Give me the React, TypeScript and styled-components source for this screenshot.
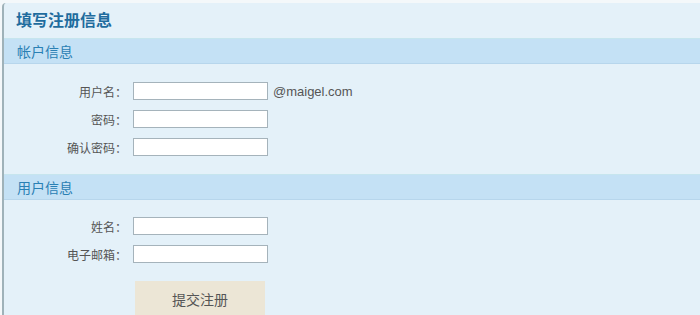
import React from 'react';
import styled, { createGlobalStyle } from 'styled-components';

const GlobalStyle = createGlobalStyle`
  html, body {
    margin: 0;
    padding: 0;
    background: #f4f8fa;
    font-family: "Liberation Sans", "Noto Sans CJK SC", sans-serif;
  }
`;

const Panel = styled.div`
  margin: 3px 0 0 2px;
  height: 312px;
  background: #e4f1f9;
  border-left: 2px solid #9fb2b9;
  border-top-left-radius: 4px;
  overflow: hidden;
`;

const Title = styled.h1`
  margin: 0;
  height: 35px;
  padding-left: 12px;
  line-height: 32px;
  font-size: 16px;
  font-weight: bold;
  color: #1f6c9e;
  font-family: "Noto Sans CJK SC", sans-serif;
`;

const SectionHeader = styled.div`
  height: 24px;
  line-height: 24px;
  padding-left: 13px;
  background: #c4e1f5;
  border-top: 1px solid #c6e5ee;
  border-bottom: 1px solid #b7d6ec;
  font-size: 14px;
  color: #2a80b4;
  font-family: "Noto Sans CJK SC", sans-serif;
`;

const Fields = styled.div<{ $top: number; $bottom: number }>`
  display: grid;
  grid-template-columns: 123px 150px;
  column-gap: 6px;
  row-gap: 10px;
  padding-top: ${(p) => p.$top}px;
  padding-bottom: ${(p) => p.$bottom}px;
  align-items: center;
`;

const Label = styled.label`
  text-align: right;
  font-size: 12px;
  color: #555;
  font-family: "Noto Sans CJK SC", sans-serif;
  white-space: nowrap;
`;

const Control = styled.div`
  display: flex;
  align-items: center;
  gap: 5px;
`;

const Input = styled.input`
  box-sizing: border-box;
  width: 135px;
  height: 18px;
  padding: 0 3px;
  border: 1px solid #a5b3bb;
  background: #fff;
  outline: none;
`;

const Suffix = styled.span`
  font-size: 13px;
  color: #555;
  white-space: nowrap;
`;

const Actions = styled.div`
  padding: 18px 0 0 131px;
`;

const SubmitButton = styled.button`
  width: 130px;
  height: 36px;
  border: none;
  background: #ece6d6;
  color: #555;
  font-size: 14px;
  font-family: "Noto Sans CJK SC", sans-serif;
  cursor: pointer;
`;

const accountFields = [
  { label: '用户名：', type: 'text', suffix: '@maigel.com' },
  { label: '密码：', type: 'password' },
  { label: '确认密码：', type: 'password' },
];

const userFields = [
  { label: '姓名：', type: 'text' },
  { label: '电子邮箱：', type: 'text' },
];

type Field = { label: string; type: string; suffix?: string };

const FieldRows: React.FC<{ fields: Field[] }> = ({ fields }) => (
  <>
    {fields.map((f) => (
      <React.Fragment key={f.label}>
        <Label>{f.label}</Label>
        <Control>
          <Input type={f.type} />
          {f.suffix && <Suffix>{f.suffix}</Suffix>}
        </Control>
      </React.Fragment>
    ))}
  </>
);

const App: React.FC = () => (
  <>
    <GlobalStyle />
    <Panel>
      <Title>填写注册信息</Title>
      <SectionHeader>帐户信息</SectionHeader>
      <Fields $top={18} $bottom={18}>
        <FieldRows fields={accountFields} />
      </Fields>
      <SectionHeader>用户信息</SectionHeader>
      <Fields $top={17} $bottom={0}>
        <FieldRows fields={userFields} />
      </Fields>
      <Actions>
        <SubmitButton type="button">提交注册</SubmitButton>
      </Actions>
    </Panel>
  </>
);

export default App;
